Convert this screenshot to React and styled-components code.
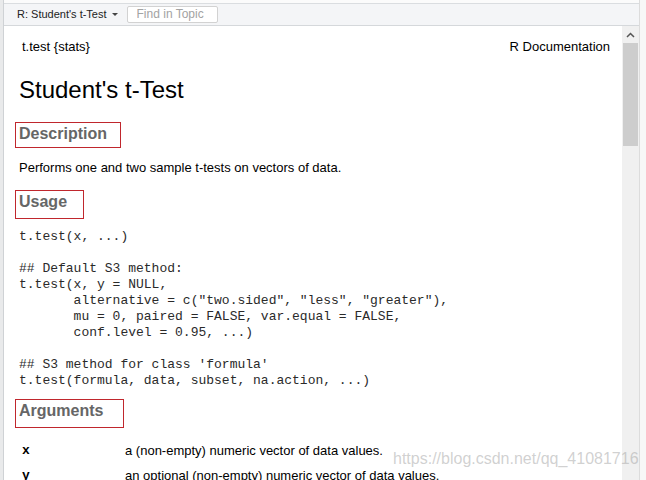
import styled, { createGlobalStyle } from "styled-components";

const GlobalStyle = createGlobalStyle`
    html, body {
        margin: 0;
        padding: 0;
        background: #ffffff;
    }
    body {
        font-family: "Liberation Sans", Arial, sans-serif;
    }
`

const codeLines = [
    "t.test(x, ...)",
    "",
    "## Default S3 method:",
    "t.test(x, y = NULL,",
    "       alternative = c(\"two.sided\", \"less\", \"greater\"),",
    "       mu = 0, paired = FALSE, var.equal = FALSE,",
    "       conf.level = 0.95, ...)",
    "",
    "## S3 method for class 'formula'",
    "t.test(formula, data, subset, na.action, ...)",
]

const args = [
    { name: "x", text: "a (non-empty) numeric vector of data values." },
    { name: "y", text: "an optional (non-empty) numeric vector of data values." },
]

const App = () => {
    return (
        <>
            <GlobalStyle />
            <StyledFrame>
                <StyledGutter />
                <StyledMain>
                    <StyledToolbar>
                        <StyledTopic>
                            R: Student's t-Test
                            <StyledCaret />
                        </StyledTopic>
                        <StyledFind placeholder="Find in Topic" />
                    </StyledToolbar>
                    <StyledBody>
                        <StyledContent>
                            <StyledHeader>
                                <span>t.test {"{stats}"}</span>
                                <span>R Documentation</span>
                            </StyledHeader>
                            <StyledTitle>Student's t-Test</StyledTitle>

                            <StyledSection $w={106} $h={26} $top={18}>Description</StyledSection>
                            <StyledPara>Performs one and two sample t-tests on vectors of data.</StyledPara>

                            <StyledSection $w={69} $h={29} $top={14}>Usage</StyledSection>
                            <StyledCode>{codeLines.join("\n")}</StyledCode>

                            <StyledSection $w={109} $h={29} $top={10}>Arguments</StyledSection>
                            <StyledTable>
                                {args.map((arg) => (
                                    <StyledArgRow key={arg.name}>
                                        <StyledArgName>{arg.name}</StyledArgName>
                                        <span>{arg.text}</span>
                                    </StyledArgRow>
                                ))}
                            </StyledTable>
                            <StyledWatermark>https://blog.csdn.net/qq_41081716</StyledWatermark>
                        </StyledContent>
                        <StyledScrollbar>
                            <StyledArrow>
                                <svg width="9" height="6" viewBox="0 0 9 6">
                                    <path d="M1 5 L4.5 1.5 L8 5" fill="none" stroke="#555" strokeWidth="1.5" />
                                </svg>
                            </StyledArrow>
                            <StyledThumb />
                        </StyledScrollbar>
                    </StyledBody>
                </StyledMain>
                <StyledEdge />
            </StyledFrame>
        </>
    )
}

const StyledFrame = styled.div`
    display: flex;
    width: 646px;
    height: 480px;
    overflow: hidden;
    background: #ffffff;
`
const StyledGutter = styled.div`
    width: 3px;
    background: #e9eaeb;
    border-right: 1px solid #cfd2d5;
`
const StyledEdge = styled.div`
    width: 6px;
    background: #f7f7f7;
    border-left: 1px solid #dcdcdc;
`
const StyledMain = styled.div`
    flex: 1;
    display: flex;
    flex-direction: column;
    min-width: 0;
`
const StyledToolbar = styled.div`
    height: 22px;
    display: flex;
    align-items: center;
    gap: 9px;
    padding-left: 13px;
    background: #f4f5f7;
    border-top: 3px solid #fbfbfb;
    border-bottom: 1px solid #d5d8db;
    box-shadow: inset 0 1px 0 #dadde0;
`
const StyledTopic = styled.div`
    display: flex;
    align-items: center;
    gap: 5px;
    font-size: 11px;
    color: #222;
`
const StyledCaret = styled.span`
    width: 0;
    height: 0;
    border-left: 3px solid transparent;
    border-right: 3px solid transparent;
    border-top: 3px solid #444;
`
const StyledFind = styled.input`
    width: 76px;
    height: 15px;
    padding: 0 4px 0 9px;
    border: 1px solid #d2d2d2;
    border-radius: 2px;
    background: #ffffff;
    font-family: "Liberation Sans", Arial, sans-serif;
    font-size: 12px;
    &::placeholder {
        color: #a3a3a3;
    }
`
const StyledBody = styled.div`
    flex: 1;
    display: flex;
    min-height: 0;
`
const StyledContent = styled.div`
    position: relative;
    flex: 1;
    padding: 13px 0 0 15px;
    color: #000;
    font-size: 13px;
`
const StyledHeader = styled.div`
    display: flex;
    justify-content: space-between;
    padding: 0 12px 0 3px;
    line-height: 16px;
`
const StyledTitle = styled.h2`
    margin: 21px 0 0;
    font-size: 24px;
    font-weight: normal;
    line-height: 28px;
`
const StyledSection = styled.h3`
    box-sizing: border-box;
    width: ${(p) => p.$w}px;
    height: ${(p) => p.$h}px;
    margin: ${(p) => p.$top}px 0 0 -4px;
    padding-left: 3px;
    border: 1px solid #c0272d;
    color: #666;
    font-size: 16px;
    font-weight: bold;
    line-height: 21px;
`
const StyledPara = styled.p`
    margin: 12px 0 0;
    line-height: 16px;
`
const StyledCode = styled.pre`
    margin: 10px 0 0;
    font-family: "Liberation Mono", "Courier New", monospace;
    font-size: 13px;
    line-height: 16px;
    color: #2a2a2a;
`
const StyledTable = styled.div`
    margin-top: 10px;
    padding-left: 3px;
`
const StyledArgRow = styled.div`
    display: grid;
    grid-template-columns: 103px 1fr;
    height: 25px;
    align-items: center;
`
const StyledArgName = styled.code`
    font-family: "Liberation Mono", "Courier New", monospace;
    font-size: 13px;
    font-weight: bold;
`
const StyledWatermark = styled.div`
    position: absolute;
    left: 389px;
    top: 424px;
    font-size: 16px;
    color: rgba(170, 170, 170, 0.55);
    white-space: nowrap;
`
const StyledScrollbar = styled.div`
    width: 17px;
    background: #f0f0f0;
    display: flex;
    flex-direction: column;
`
const StyledArrow = styled.div`
    height: 17px;
    display: flex;
    align-items: center;
    justify-content: center;
`
const StyledThumb = styled.div`
    height: 103px;
    margin: 0 1px;
    background: #cdcdcd;
`

export default App;
